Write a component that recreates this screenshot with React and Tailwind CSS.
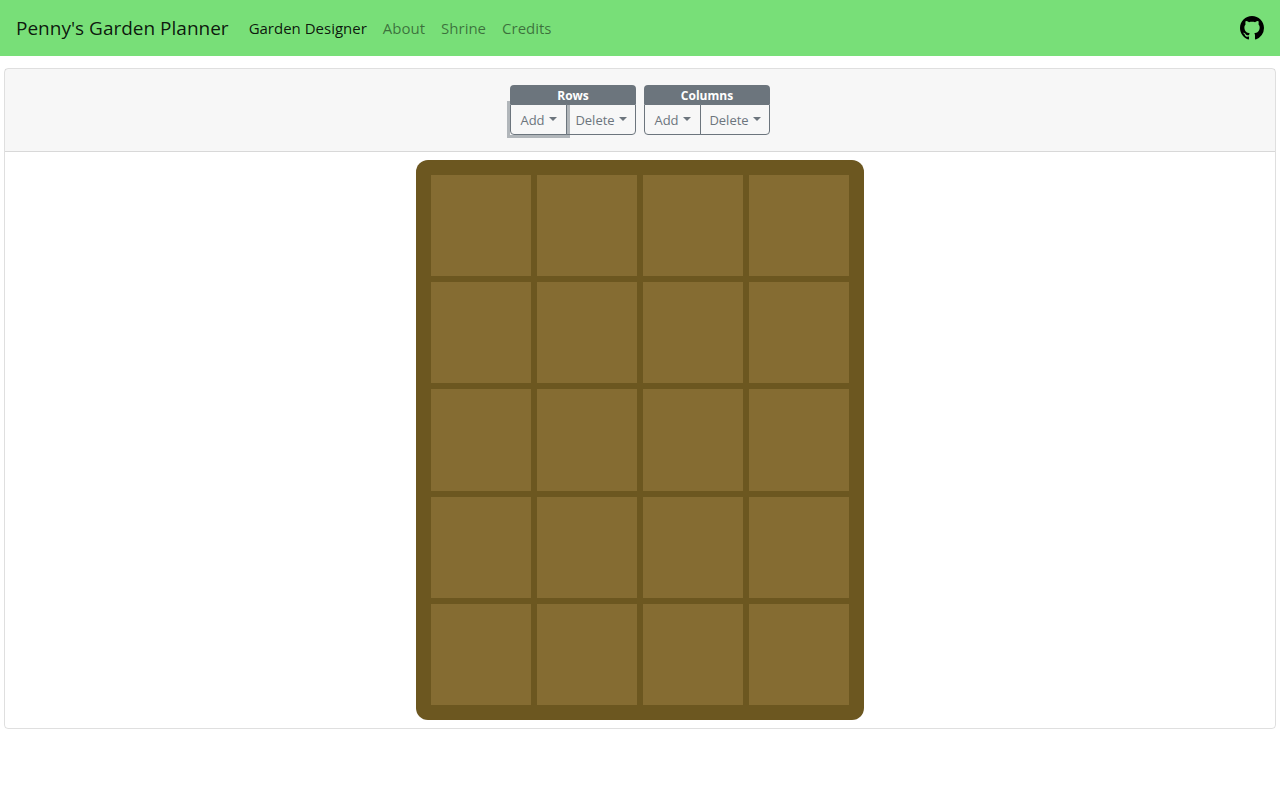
import React from "react";

const links = [
  { label: "Garden Designer", active: true },
  { label: "About" },
  { label: "Shrine" },
  { label: "Credits" },
];

const ROWS = 5;
const COLUMNS = 4;

function GitHubMark() {
  return (
    <svg viewBox="0 0 16 16" className="size-6" fill="currentColor" aria-hidden="true">
      <path
        fillRule="evenodd"
        d="M8 0C3.58 0 0 3.58 0 8c0 3.54 2.29 6.53 5.47 7.59.4.07.55-.17.55-.38 0-.19-.01-.82-.01-1.49-2.01.37-2.53-.49-2.69-.94-.09-.23-.48-.94-.82-1.13-.28-.15-.68-.52-.01-.53.63-.01 1.08.58 1.23.82.72 1.21 1.87.87 2.33.66.07-.52.28-.87.51-1.07-1.78-.2-3.64-.89-3.64-3.95 0-.87.31-1.59.82-2.15-.08-.2-.36-1.02.08-2.12 0 0 .67-.21 2.2.82.64-.18 1.32-.27 2-.27s1.36.09 2 .27c1.53-1.04 2.2-.82 2.2-.82.44 1.1.16 1.92.08 2.12.51.56.82 1.27.82 2.15 0 3.07-1.87 3.75-3.65 3.95.29.25.54.73.54 1.48 0 1.07-.01 1.93-.01 2.2 0 .21.15.46.55.38A8.01 8.01 0 0 0 16 8c0-4.42-3.58-8-8-8z"
      />
    </svg>
  );
}

function Caret() {
  return (
    <svg viewBox="0 0 8 4" className="mb-[3px] h-1 w-2" fill="currentColor" aria-hidden="true">
      <path d="M0 0h8L4 4z" />
    </svg>
  );
}

function MenuButton({ label, className }) {
  return (
    <button
      type="button"
      aria-haspopup="menu"
      className={
        "flex h-[31px] w-full items-center justify-center gap-1 border border-[#6c757d] pt-px text-[13px] leading-5 text-[#6c757d] " +
        className
      }
    >
      {label}
      <Caret />
    </button>
  );
}

function ControlGroup({ title, focused }) {
  return (
    <div role="group" aria-label={title} className="flex w-[126px] flex-col">
      <div className="h-[19px] rounded-t bg-[#6c757d] text-center text-[12px] leading-[22px] font-bold text-white">
        {title}
      </div>
      <div className="flex">
        <div className={focused ? "w-[57px] shadow-[0_0_0_3px_rgba(108,117,125,0.5)]" : "w-[57px]"}>
          <MenuButton label="Add" className="rounded-bl" />
        </div>
        <div className="-ml-px flex-1">
          <MenuButton label="Delete" className="rounded-br" />
        </div>
      </div>
    </div>
  );
}

export default function App() {
  return (
    <div className="min-h-screen bg-white font-['Open_Sans','Noto_Sans',sans-serif] text-[#212529]">
      <nav className="flex h-14 items-center gap-5 bg-[#78df78] px-4">
        <a href="#home" className="text-[19px] leading-[30px] text-black/90">
          Penny's Garden Planner
        </a>
        <ul className="flex gap-4 text-[15px] leading-6">
          {links.map(({ label, active }) => (
            <li key={label}>
              <a href={"#" + label} className={active ? "text-black/90" : "text-black/50"}>
                {label}
              </a>
            </li>
          ))}
        </ul>
        <a href="#github" aria-label="GitHub" className="ml-auto text-black">
          <GitHubMark />
        </a>
      </nav>
      <main className="mx-1 mt-3 rounded border border-black/[0.125]">
        <header className="flex justify-center gap-2 border-b border-black/[0.125] bg-black/[0.03] py-4">
          <ControlGroup title="Rows" focused />
          <ControlGroup title="Columns" />
        </header>
        <div className="flex justify-center p-2">
          <div className="grid h-[560px] w-full max-w-[448px] grid-cols-4 grid-rows-5 gap-1.5 rounded-xl bg-[#6c5720] p-[15px]">
            {Array.from({ length: ROWS * COLUMNS }, (_, i) => (
              <div key={i} className="bg-[#856c32]" />
            ))}
          </div>
        </div>
      </main>
    </div>
  );
}
